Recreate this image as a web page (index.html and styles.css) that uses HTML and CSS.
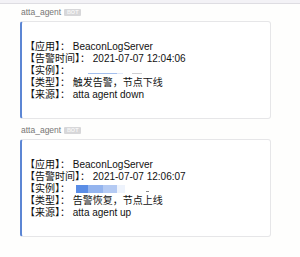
FILE: index.html
```html
<!DOCTYPE html>
<html lang="zh-CN">
<head>
    <meta charset="UTF-8">
    <title>atta_agent</title>
    <link rel="stylesheet" href="styles.css">
</head>
<body>
<div class="topbar"></div>
<div class="feed">
  <div class="msg">
    <div class="sender"><span class="name">atta_agent</span><span class="bot">BOT</span></div>
    <div class="card">
      <div class="line">【应用】： BeaconLogServer</div>
      <div class="line">【告警时间】： 2021-07-07 12:04:06</div>
      <div class="line">【实例】：<span class="smear smear-thin"></span></div>
      <div class="line">【类型】： 触发告警，节点下线</div>
      <div class="line">【来源】： atta agent down</div>
    </div>
  </div>
  <div class="msg">
    <div class="sender"><span class="name">atta_agent</span><span class="bot">BOT</span></div>
    <div class="card">
      <div class="line">【应用】： BeaconLogServer</div>
      <div class="line">【告警时间】： 2021-07-07 12:06:07</div>
      <div class="line">【实例】：<span class="smear smear-block"></span><span class="smear smear-dash"></span></div>
      <div class="line">【类型】： 告警恢复，节点上线</div>
      <div class="line">【来源】： atta agent up</div>
    </div>
  </div>
</div>
</body>
</html>
```

FILE: styles.css
```css
body {
    margin: 0;
    padding: 0;
    background: #fefefd;
    font-family: 'Liberation Sans', 'Noto Sans CJK SC', sans-serif;
    color: #111111;
}
.topbar {
    height: 3px;
    background: #f3f2f6;
    border-bottom: 1px solid #dedde2;
}
.msg {
    margin-top: 3px;
}
.msg + .msg {
    margin-top: 6px;
}
.sender {
    display: flex;
    align-items: center;
    height: 10px;
    padding-left: 21px;
}
.sender .name {
    font-size: 8.5px;
    color: #767676;
    line-height: 10px;
}
.sender .bot {
    margin-left: 3px;
    width: 17px;
    height: 7px;
    background: #d7d7d9;
    border-radius: 1px;
    color: #f6f6f6;
    font-size: 5.5px;
    font-weight: bold;
    line-height: 7px;
    text-align: center;
}
.card {
    box-sizing: border-box;
    width: 251px;
    margin: 4px 0 0 20px;
    padding: 19px 6px 17px 3px;
    background: #ffffff;
    border: 1px solid #e6e6e8;
    border-left: 2px solid #5c86d4;
    border-radius: 3px;
}
.line {
    font-size: 10px;
    line-height: 12px;
    white-space: nowrap;
}
.smear {
    display: inline-block;
}
.smear-thin {
    margin-left: 18px;
    width: 54px;
    height: 1px;
    background: linear-gradient(to right, #a3bfee 0, #a3bfee 29px, #dfe8f8 29px, #dfe8f8 35px, transparent 35px, transparent 44px, #cfcfd2 44px, #cfcfd2 54px);
}
.smear-block {
    margin-left: 6px;
    width: 49px;
    height: 8px;
    vertical-align: -1px;
    background: linear-gradient(to right, #5a8de6 0, #5a8de6 12px, #94b4ee 12px, #94b4ee 27px, #b4caf3 27px, #b4caf3 41px, #eef3fc 41px, #eef3fc 49px);
}
.smear-dash {
    margin-left: 21px;
    width: 3px;
    height: 1px;
    background: #8a8a8a;
}
```
